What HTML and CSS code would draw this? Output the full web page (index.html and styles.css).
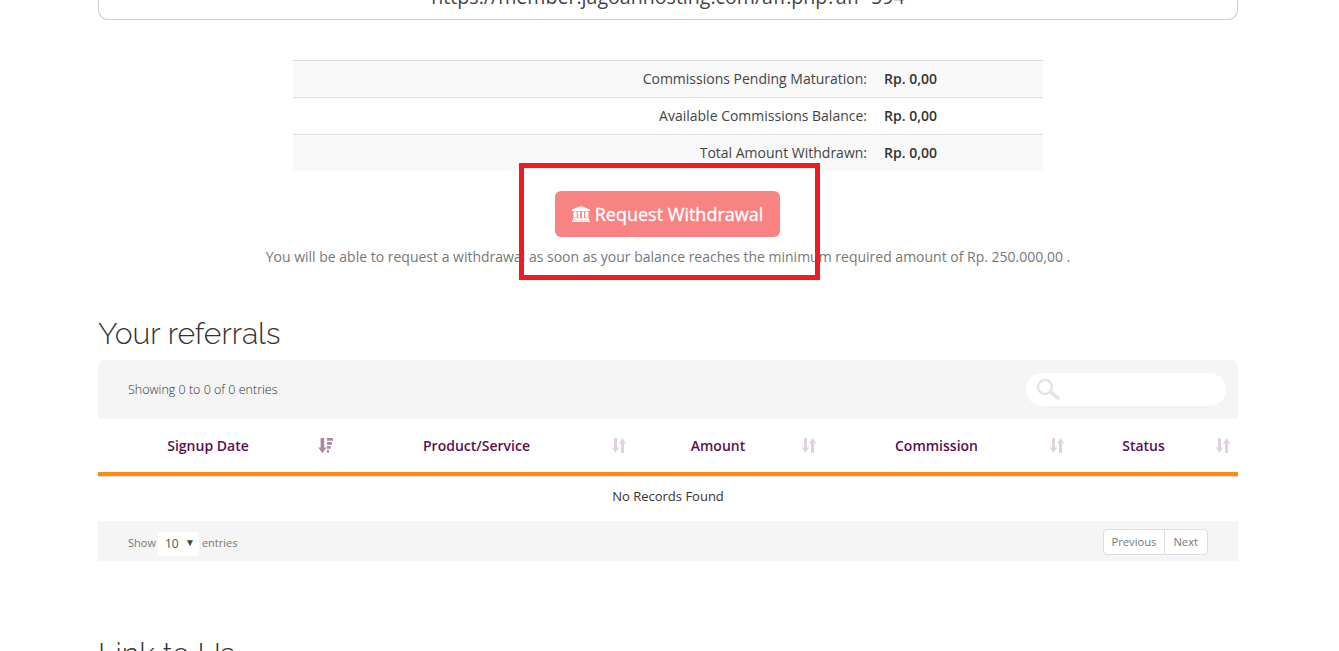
FILE: index.html
```html
<!DOCTYPE html>
<html lang="en">
<head>
<meta charset="utf-8">
<title>Affiliates</title>
<link rel="stylesheet" href="styles.css">
</head>
<body>
<main class="page">
  <div class="link-box"><span class="link-text">https://member.jagoanhosting.com/aff.php?aff=594</span></div>

  <table class="stats">
    <tr class="odd"><td class="label">Commissions Pending Maturation:</td><td class="value">Rp. 0,00</td></tr>
    <tr><td class="label">Available Commissions Balance:</td><td class="value">Rp. 0,00</td></tr>
    <tr class="odd"><td class="label">Total Amount Withdrawn:</td><td class="value">Rp. 0,00</td></tr>
  </table>

  <div class="withdraw">
    <button class="btn" type="button">
      <svg class="bank" viewBox="0 0 18 16" width="18" height="16" aria-hidden="true"><path d="M9 0 L18 3.6 V5 H0 V3.6 Z M1.6 5.6 H4.8 V11.8 H1.6 Z M5.9 5.6 H8.1 V11.8 H5.9 Z M9.9 5.6 H12.1 V11.8 H9.9 Z M13.2 5.6 H16.4 V11.8 H13.2 Z M1 12.2 H17 V14 H1 Z M0 14.2 H18 V16 H0 Z" fill="#fff"/></svg>
      Request Withdrawal
    </button>
    <p class="note">You will be able to request a withdrawal as soon as your balance reaches the minimum required amount of Rp. 250.000,00 .</p>
  </div>

  <h2 class="heading">Your referrals</h2>
  <div class="toolbar">
    <span class="info">Showing 0 to 0 of 0 entries</span>
    <div class="search">
      <svg viewBox="0 0 26 22" width="26" height="22" aria-hidden="true"><circle cx="9" cy="9" r="7" fill="none" stroke="#e3e3e3" stroke-width="2.4"/><path d="M14.5 14 L22 20" stroke="#e3e3e3" stroke-width="3.6" stroke-linecap="round"/></svg>
    </div>
  </div>

  <div class="thead">
    <div class="th c1"><span class="th-name">Signup Date</span>
      <svg class="sort active" viewBox="0 0 15 15" width="15" height="15" aria-hidden="true"><path d="M2.6 0 H6.2 V9.6 H8.6 L4.4 15 L0.2 9.6 H2.6 Z M9 0 H15 V2.8 H9 Z M9 4 H14 V6.8 H9 Z M9 8 H12.6 V10.8 H9 Z M9 12 H11 V14.8 H9 Z"/></svg></div>
    <div class="th c2"><span class="th-name">Product/Service</span>
      <svg class="sort" viewBox="0 0 14 15" width="14" height="15" aria-hidden="true"><path d="M2 0 H5 V9.6 H7 L3.5 15 L0 9.6 H2 Z M9 15 H12 V5.4 H14 L10.5 0 L7 5.4 H9 Z"/></svg></div>
    <div class="th c3"><span class="th-name">Amount</span>
      <svg class="sort" viewBox="0 0 14 15" width="14" height="15" aria-hidden="true"><path d="M2 0 H5 V9.6 H7 L3.5 15 L0 9.6 H2 Z M9 15 H12 V5.4 H14 L10.5 0 L7 5.4 H9 Z"/></svg></div>
    <div class="th c4"><span class="th-name">Commission</span>
      <svg class="sort" viewBox="0 0 14 15" width="14" height="15" aria-hidden="true"><path d="M2 0 H5 V9.6 H7 L3.5 15 L0 9.6 H2 Z M9 15 H12 V5.4 H14 L10.5 0 L7 5.4 H9 Z"/></svg></div>
    <div class="th c5"><span class="th-name">Status</span>
      <svg class="sort" viewBox="0 0 14 15" width="14" height="15" aria-hidden="true"><path d="M2 0 H5 V9.6 H7 L3.5 15 L0 9.6 H2 Z M9 15 H12 V5.4 H14 L10.5 0 L7 5.4 H9 Z"/></svg></div>
  </div>
  <div class="empty">No Records Found</div>

  <div class="footer-bar">
    <div class="length">Show <span class="select"><span class="select-val">10</span><span class="caret">▼</span></span> entries</div>
    <div class="pager"><span class="pg">Previous</span><span class="pg">Next</span></div>
  </div>

  <h2 class="heading link-us">Link to Us</h2>
</main>
<div class="highlight"></div>
</body>
</html>
```
FILE: styles.css
```css
html, body { margin: 0; padding: 0; height: 651px; overflow: hidden; background: #fff; }
body { font-family: "Open Sans", sans-serif; font-size: 14px; color: #333; position: relative; }
.page { width: 1140px; margin: 0 0 0 98px; }

.link-box { box-sizing: border-box; height: 20px; border: 1px solid #ccc; border-top: 0; border-radius: 0 0 10px 10px; text-align: center; overflow: hidden; }
.link-text { display: block; font-size: 19.6px; line-height: 24px; margin-top: -15px; color: #444; }

.stats { width: 750px; margin: 40px auto 0; border-collapse: collapse; }
.stats td { height: 36px; padding: 0 8px; border-top: 1px solid #ddd; font-size: 14px; line-height: 20px; }
.stats .odd td { background: #f9f9f9; }
.stats .label { text-align: right; width: 566px; padding-right: 9px; color: #444; }
.stats .value { font-weight: 600; text-align: left; }

.withdraw { text-align: center; }
.btn { display: inline-flex; align-items: center; justify-content: center; gap: 5px; box-sizing: border-box; width: 225px; height: 46px; margin: 20px 1px 0 0; border: 0; border-radius: 6px; background: #f98383; color: #fff; font-family: "Open Sans", sans-serif; font-size: 18px; font-weight: 400; -webkit-text-stroke: 0.3px #fff; padding: 0; }
.note { margin: 10px 0 0; line-height: 20px; color: #777; font-size: 14px; }

.heading { font-family: Raleway, Lato, sans-serif; font-weight: 300; font-size: 30.2px; line-height: 33px; margin: 0; color: #333; }
.withdraw + .heading { margin-top: 50px; }

.toolbar { display: flex; justify-content: space-between; align-items: center; height: 59px; margin-top: 10px; padding: 0 11px 0 30px; background: #f5f5f5; border-radius: 6px 6px 0 0; }
.info { font-size: 12.5px; font-weight: 300; color: #333; }
.search { box-sizing: border-box; width: 202px; height: 35px; background: #fff; border: 1px solid #f3f3f3; border-radius: 17px; padding: 5px 0 0 10px; line-height: 0; }

.thead { display: flex; align-items: center; height: 53px; border-bottom: 4px solid #ff8a0d; box-shadow: 0 1px 0 #ddd; }
.th { box-sizing: border-box; height: 100%; display: flex; align-items: center; justify-content: center; position: relative; font-weight: 600; font-size: 14px; color: #5b0f4e; }
.th .sort { position: absolute; right: 8px; top: 19px; fill: #5b0f4e; opacity: .18; }
.th .sort.active { opacity: .5; }
.c1 { width: 243px; padding-right: 23px; }
.c2 { width: 293px; padding-right: 22px; }
.c3 { width: 190px; padding-right: 22px; }
.c4 { width: 248px; padding-right: 23px; }
.c5 { width: 166px; padding-right: 23px; }

.empty { height: 45px; line-height: 40px; text-align: center; font-size: 13px; color: #333; }

.footer-bar { box-sizing: border-box; display: flex; justify-content: space-between; align-items: center; height: 40px; padding: 2px 30px 0; background: #f5f5f5; }
.length { display: flex; align-items: center; gap: 2px; font-size: 11px; color: #777; }
.select { box-sizing: border-box; display: flex; align-items: center; justify-content: space-between; width: 41px; height: 24px; padding: 0 4px 0 7px; margin: 4px 1px 0 0; background: #fff; border-radius: 3px; font-size: 12px; color: #555; }
.select-val { margin-top: -2px; }
.caret { font-size: 10px; color: #444; margin-top: -4px; }
.pager { display: flex; box-sizing: border-box; height: 26px; background: #fff; border: 1px solid #ddd; border-radius: 4px; }
.pg { display: flex; align-items: center; font-size: 11.2px; color: #777; padding: 0 8px 2px; }
.pg + .pg { border-left: 1px solid #ddd; padding-right: 9px; }

.heading.link-us { margin-top: 76px; }

.highlight { position: absolute; left: 519px; top: 163px; width: 301px; height: 117px; box-sizing: border-box; border: 5px solid #ed1c24; pointer-events: none; }
```
